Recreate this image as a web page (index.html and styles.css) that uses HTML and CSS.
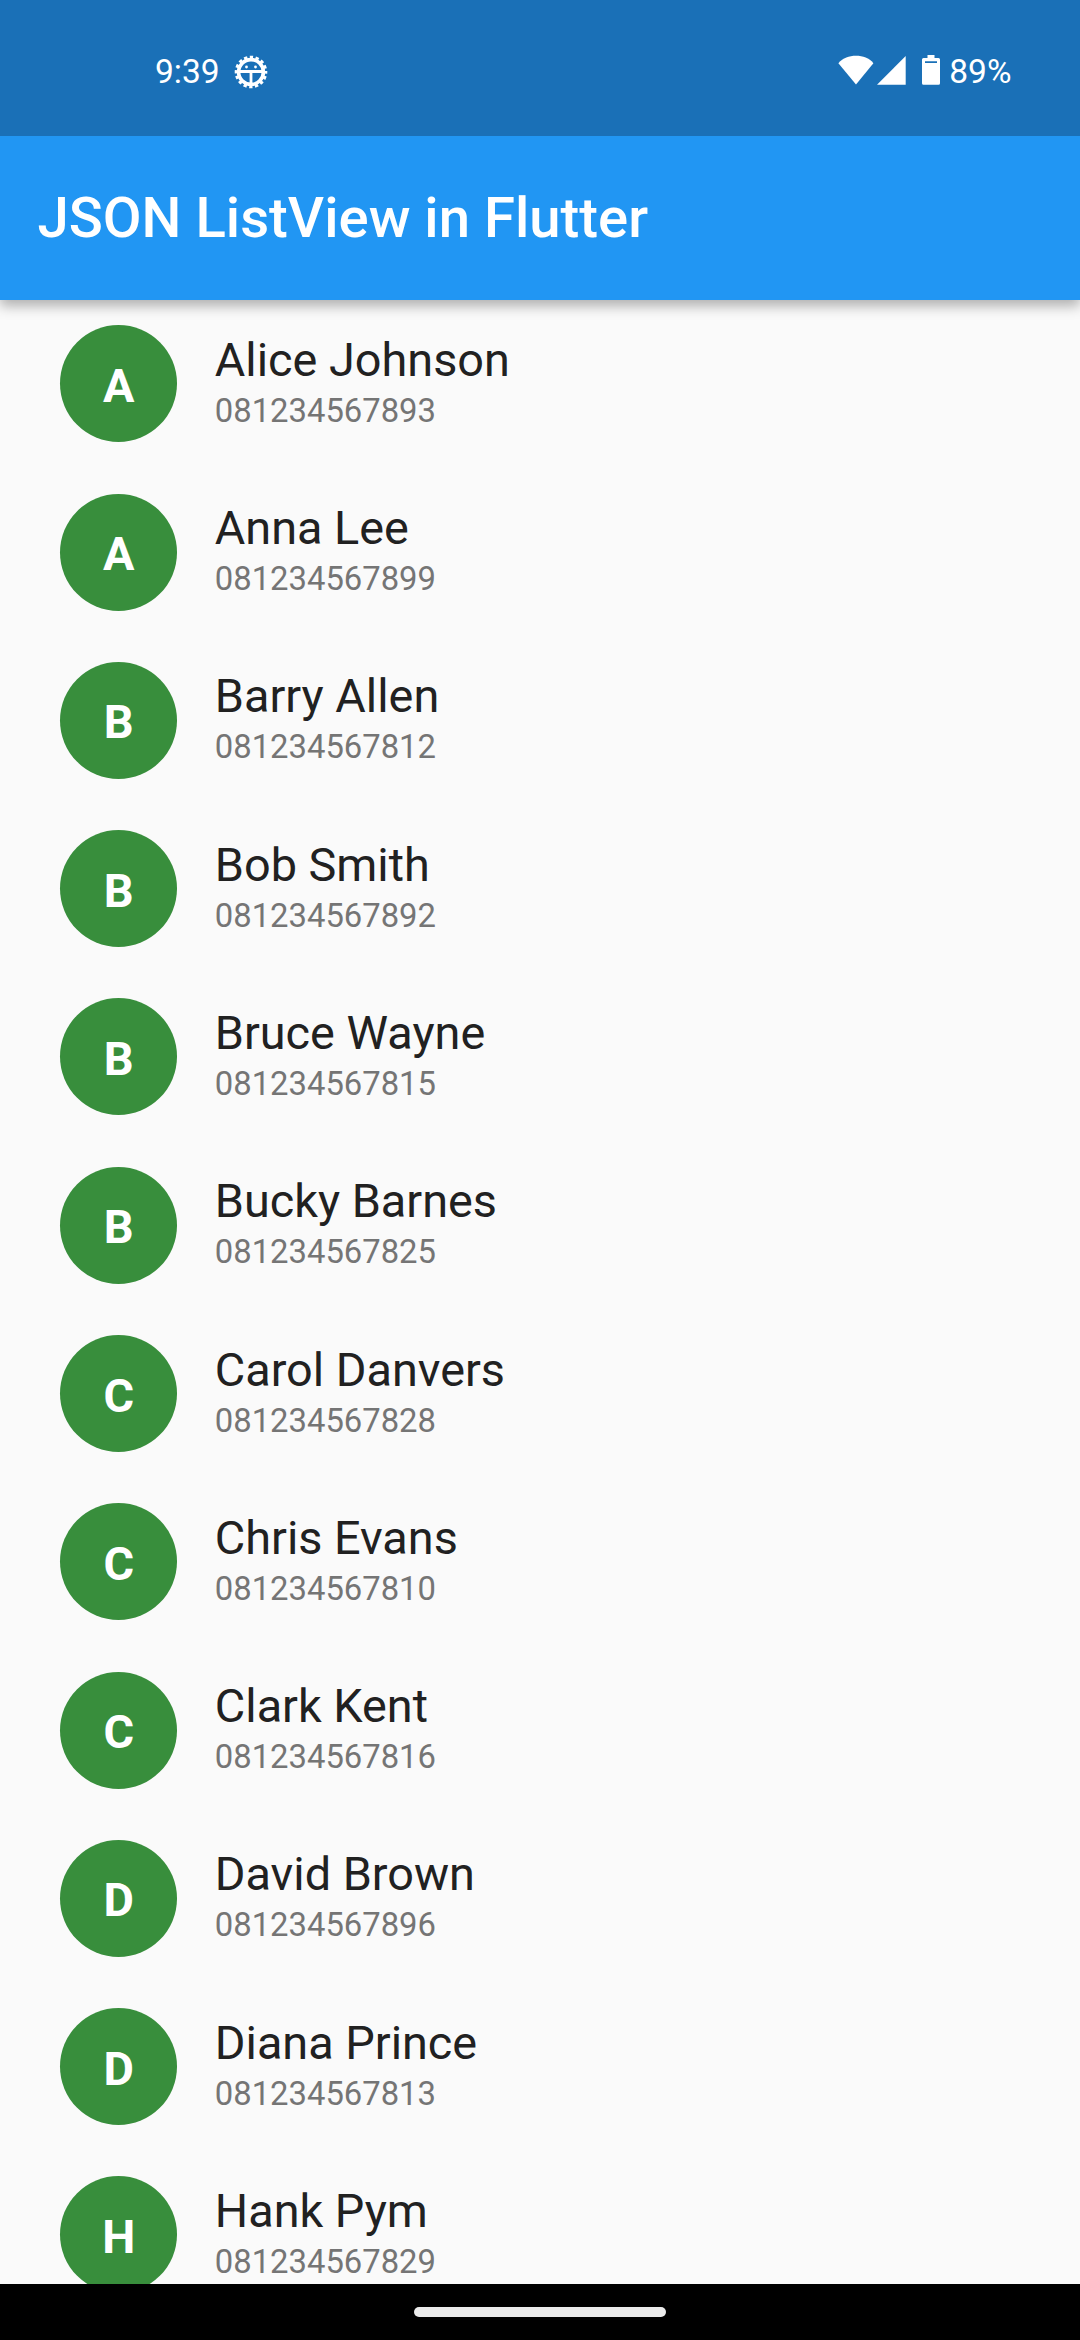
FILE: index.html
```html
<!DOCTYPE html>
<html lang="en">
<head>
<meta charset="utf-8">
<title>JSON ListView in Flutter</title>
<link rel="stylesheet" href="styles.css">
</head>
<body>
<div class="screen">
  <header class="status-bar">
    <span class="clock">9:39</span>
    <svg class="debug-icon" width="34" height="34" viewBox="-17 -17 34 34">
      <circle r="12.400" fill="none" stroke="#fff" stroke-width="3.600"/>
      <circle r="14.7" fill="none" stroke="#fff" stroke-width="3.200" stroke-dasharray="3.3 2.473" stroke-dashoffset="1.65"/>
      <path d="M-12 -.5H12M0 -.5V12" stroke="#fff" stroke-width="2.8"/>
      <circle cx="-4.500" cy="-5" r="1.4" fill="#fff"/><circle cx="4.500" cy="-5" r="1.4" fill="#fff"/>
    </svg>
    <span class="spacer"></span>
    <svg class="wifi" width="36" height="30" viewBox="0 0 36 30"><path d="M0.4 8.2C5 3 11 .8 18 .8S31 3 35.4 8.2L18 29.6Z" fill="#fff"/></svg>
    <svg class="signal" width="30" height="30" viewBox="0 0 30 30"><path d="M1 29.7L29.7 1V29.7Z" fill="#fff"/></svg>
    <svg class="battery" width="18" height="30" viewBox="0 0 18 30"><path fill-rule="evenodd" d="M5.5 0H12.5V3H16.5Q18 3 18 4.500V28.200Q18 29.700 16.500 29.700H1.500Q0 29.700 0 28.200V4.500Q0 3 1.500 3H5.500ZM3 6.200V8H15V6.200Z" fill="#fff"/></svg>
    <span class="percent">89%</span>
  </header>
  <div class="app-bar"><h1 class="title">JSON ListView in Flutter</h1></div>
  <ul class="contacts">
    <li class="contact"><span class="avatar">A</span><div class="details"><span class="name">Alice Johnson</span><span class="phone">081234567893</span></div></li>
    <li class="contact"><span class="avatar">A</span><div class="details"><span class="name">Anna Lee</span><span class="phone">081234567899</span></div></li>
    <li class="contact"><span class="avatar">B</span><div class="details"><span class="name">Barry Allen</span><span class="phone">081234567812</span></div></li>
    <li class="contact"><span class="avatar">B</span><div class="details"><span class="name">Bob Smith</span><span class="phone">081234567892</span></div></li>
    <li class="contact"><span class="avatar">B</span><div class="details"><span class="name">Bruce Wayne</span><span class="phone">081234567815</span></div></li>
    <li class="contact"><span class="avatar">B</span><div class="details"><span class="name">Bucky Barnes</span><span class="phone">081234567825</span></div></li>
    <li class="contact"><span class="avatar">C</span><div class="details"><span class="name">Carol Danvers</span><span class="phone">081234567828</span></div></li>
    <li class="contact"><span class="avatar">C</span><div class="details"><span class="name">Chris Evans</span><span class="phone">081234567810</span></div></li>
    <li class="contact"><span class="avatar">C</span><div class="details"><span class="name">Clark Kent</span><span class="phone">081234567816</span></div></li>
    <li class="contact"><span class="avatar">D</span><div class="details"><span class="name">David Brown</span><span class="phone">081234567896</span></div></li>
    <li class="contact"><span class="avatar">D</span><div class="details"><span class="name">Diana Prince</span><span class="phone">081234567813</span></div></li>
    <li class="contact"><span class="avatar">H</span><div class="details"><span class="name">Hank Pym</span><span class="phone">081234567829</span></div></li>
  </ul>
  <footer class="nav-bar"><span class="handle"></span></footer>
</div>
</body>
</html>
```
FILE: styles.css
```css
* { box-sizing: border-box; }
body { margin: 0; }
.screen {
  display: flex;
  flex-direction: column;
  width: 1080px;
  height: 2340px;
  overflow: hidden;
  background: #fafafa;
  font-family: Roboto, sans-serif;
}
.status-bar {
  position: relative;
  z-index: 2;
  display: flex;
  align-items: center;
  flex: none;
  height: 136px;
  padding: 7px 68.5px 0 155px;
  background: #1a70b7;
  color: #fff;
  font-size: 33.5px;
}
.debug-icon { margin-left: 14px; }
.spacer { flex: 1; }
.wifi { margin: 0 2px 3px 0; }
.signal { margin: 0 16px 3px 0; }
.battery { margin: 0 9px 3px 0; }
.app-bar {
  position: relative;
  z-index: 1;
  display: flex;
  align-items: center;
  flex: none;
  height: 163.8px;
  padding-left: 37.5px;
  background: #2196f3;
  box-shadow: 0 6px 12px rgba(0, 0, 0, .3);
}
.title {
  margin: 0;
  color: #fff;
  font-size: 56.25px;
  font-weight: 500;
}
.contacts {
  flex: 1;
  min-height: 0;
  margin: 0;
  padding: 0;
  overflow: hidden;
  list-style: none;
}
.contact {
  display: flex;
  align-items: center;
  height: 168.27px;
  padding-left: 60.3px;
}
.avatar {
  display: flex;
  align-items: center;
  justify-content: center;
  width: 117px;
  height: 117px;
  margin-right: 37.5px;
  padding-top: 4px;
  border-radius: 50%;
  background: #388e3c;
  color: #fff;
  font-size: 46.8px;
  font-weight: 700;
}
.details {
  display: flex;
  flex-direction: column;
  padding-bottom: 1px;
}
.name {
  color: #212121;
  font-size: 46.8px;
  line-height: 56px;
}
.phone {
  color: #757575;
  font-size: 32.8px;
  line-height: 47px;
}
.nav-bar {
  display: flex;
  align-items: center;
  justify-content: center;
  flex: none;
  height: 56px;
  background: #000;
}
.handle {
  width: 252px;
  height: 10px;
  border-radius: 5px;
  background: #ebebeb;
}
```
